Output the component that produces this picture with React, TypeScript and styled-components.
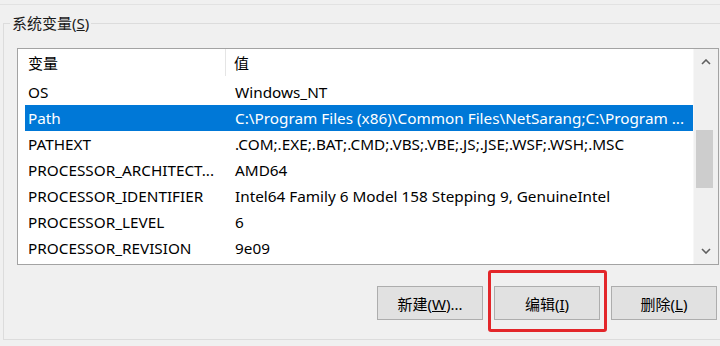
import styled, { createGlobalStyle } from 'styled-components';

const GlobalStyle = createGlobalStyle`
	body {
		margin: 0;
		background: #f0f0f0;
		font-family: "Noto Sans", "Noto Sans CJK SC", sans-serif;
		color: #000;
	}
`;

const StyledScreen = styled.div`
	width: 720px;
	height: 346px;
	overflow: hidden;
	background: #f0f0f0;
`;

const StyledTopRule = styled.div`
	height: 4px;
	border-bottom: 1px solid #e2e2e2;
`;

const StyledGroup = styled.fieldset`
	margin: 9px 0 0 3px;
	width: 740px;
	min-width: 0;
	border: 1px solid #dcdcdc;
	padding: 0 0 19px 13px;
`;

const StyledLegend = styled.legend`
	margin-left: -7px;
	padding: 0 2px;
	font-size: 15px;
	line-height: 18px;
	color: #1a1a1a;
`;

const StyledListBox = styled.div`
	box-sizing: border-box;
	margin-top: 16px;
	width: 702px;
	height: 217px;
	border: 1px solid #a3a3a3;
	background: #fff;
	display: flex;
`;

const StyledListBody = styled.div`
	flex: 1;
	padding-left: 7px;
	min-width: 0;
`;

const StyledHeader = styled.div`
	display: flex;
	height: 30px;
	font-size: 15px;
`;

const StyledHeadCell = styled.div<{ $width?: number }>`
	display: flex;
	align-items: center;
	height: 27px;
	box-sizing: border-box;
	${p => (p.$width ? `width: ${p.$width}px; border-right: 1px solid #e5e5e5; padding-left: 3px;` : 'flex: 1; padding-left: 8px;')}
`;

const StyledRow = styled.div<{ $selected?: boolean }>`
	display: flex;
	align-items: center;
	height: 26px;
	font-size: 15.3px;
	white-space: nowrap;
	background: ${p => (p.$selected ? '#0078d7' : 'transparent')};
	color: ${p => (p.$selected ? '#fff' : '#000')};
`;

const StyledNameCell = styled.div`
	box-sizing: border-box;
	width: 201px;
	padding-left: 3px;
	overflow: hidden;
`;

const StyledValueCell = styled.div`
	flex: 1;
	padding-left: 9px;
	overflow: hidden;
`;

const StyledScrollBar = styled.div`
	width: 24px;
	background: #f0f0f0;
	border-left: 1px solid #f7f7f7;
	display: flex;
	flex-direction: column;
`;

const StyledArrow = styled.div`
	height: 26px;
	display: flex;
	align-items: center;
	justify-content: center;
`;

const StyledTrack = styled.div`
	flex: 1;
`;

const StyledThumb = styled.div<{ $top: number; $height: number }>`
	margin: ${p => p.$top}px 0 0 2px;
	width: 17px;
	height: ${p => p.$height}px;
	background: #cdcdcd;
`;

const StyledButtonRow = styled.div`
	width: 702px;
	display: flex;
	justify-content: flex-end;
	gap: 11px;
	margin-top: 21px;
	padding-right: 2px;
	box-sizing: border-box;
`;

const StyledButton = styled.button`
	width: 106px;
	height: 34px;
	background: #e1e1e1;
	border: 1px solid #adadad;
	font-family: inherit;
	font-size: 15px;
	color: #000;
	padding: 0;
`;

const StyledMarked = styled.div`
	position: relative;

	&::after {
		content: '';
		position: absolute;
		top: -16px;
		bottom: -12px;
		left: -6px;
		right: -7px;
		border: 3px solid #e3262a;
		border-radius: 3px;
		pointer-events: none;
	}
`;

const rows = [
	{ name: 'OS', value: 'Windows_NT' },
	{ name: 'Path', value: 'C:\\Program Files (x86)\\Common Files\\NetSarang;C:\\Program ...', selected: true },
	{ name: 'PATHEXT', value: '.COM;.EXE;.BAT;.CMD;.VBS;.VBE;.JS;.JSE;.WSF;.WSH;.MSC' },
	{ name: 'PROCESSOR_ARCHITECT...', value: 'AMD64' },
	{ name: 'PROCESSOR_IDENTIFIER', value: 'Intel64 Family 6 Model 158 Stepping 9, GenuineIntel' },
	{ name: 'PROCESSOR_LEVEL', value: '6' },
	{ name: 'PROCESSOR_REVISION', value: '9e09' },
];

function Chevron({ up }: { up?: boolean }) {
	return (
		<svg width='10' height='6' viewBox='0 0 10 6'>
			<polyline
				points={up ? '1,5 5,1 9,5' : '1,1 5,5 9,1'}
				fill='none'
				stroke='#5f5f5f'
				strokeWidth='1.6'
			/>
		</svg>
	);
}

function App() {
	return (
		<StyledScreen>
			<GlobalStyle />
			<StyledTopRule />
			<StyledGroup>
				<StyledLegend>
					系统变量(<u>S</u>)
				</StyledLegend>
				<StyledListBox>
					<StyledListBody>
						<StyledHeader>
							<StyledHeadCell $width={201}>变量</StyledHeadCell>
							<StyledHeadCell>值</StyledHeadCell>
						</StyledHeader>
						{rows.map(r => (
							<StyledRow key={r.name} $selected={r.selected}>
								<StyledNameCell>{r.name}</StyledNameCell>
								<StyledValueCell>{r.value}</StyledValueCell>
							</StyledRow>
						))}
					</StyledListBody>
					<StyledScrollBar>
						<StyledArrow>
							<Chevron up />
						</StyledArrow>
						<StyledTrack>
							<StyledThumb $top={55} $height={58} />
						</StyledTrack>
						<StyledArrow>
							<Chevron />
						</StyledArrow>
					</StyledScrollBar>
				</StyledListBox>
				<StyledButtonRow>
					<StyledButton>
						新建(<u>W</u>)...
					</StyledButton>
					<StyledMarked>
						<StyledButton>
							编辑(<u>I</u>)
						</StyledButton>
					</StyledMarked>
					<StyledButton>
						删除(<u>L</u>)
					</StyledButton>
				</StyledButtonRow>
			</StyledGroup>
		</StyledScreen>
	);
}

export default App;
